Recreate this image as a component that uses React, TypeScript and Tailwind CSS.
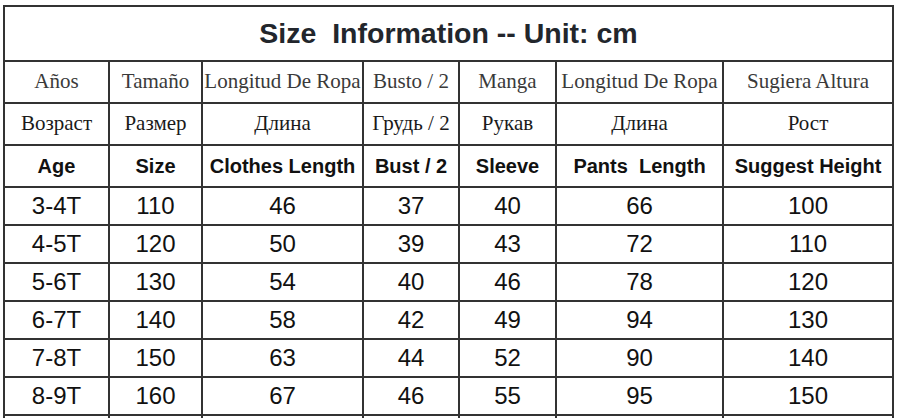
import React from 'react';

const cols = [105, 93, 161, 96, 97, 167, 170];

const spanishRow = ['Años', 'Tamaño', 'Longitud De Ropa', 'Busto / 2', 'Manga', 'Longitud De Ropa', 'Sugiera Altura'];
const russianRow = ['Возраст', 'Размер', 'Длина', 'Грудь / 2', 'Рукав', 'Длина', 'Рост'];
const englishRow = ['Age', 'Size', 'Clothes Length', 'Bust / 2', 'Sleeve', 'Pants  Length', 'Suggest Height'];

const rows = [
  ['3-4T', '110', '46', '37', '40', '66', '100'],
  ['4-5T', '120', '50', '39', '43', '72', '110'],
  ['5-6T', '130', '54', '40', '46', '78', '120'],
  ['6-7T', '140', '58', '42', '49', '94', '130'],
  ['7-8T', '150', '63', '44', '52', '90', '140'],
  ['8-9T', '160', '67', '46', '55', '95', '150'],
];

const cell = 'border-2 border-[#333] text-center align-middle p-0 whitespace-pre';

export default function App() {
  return (
    <div className="bg-white w-[900px] h-[418px] overflow-hidden pl-[3px] pt-[5px]">
      <table className="table-fixed border-collapse w-[891px]">
        <colgroup>
          {cols.map((w, i) => (
            <col key={i} style={{ width: w }} />
          ))}
        </colgroup>
        <tbody>
          <tr className="h-[55px]">
            <td
              colSpan={7}
              className={`${cell} font-['Liberation_Sans',Arial,sans-serif] font-bold text-[28.5px] text-[#22262c]`}
            >
              {'Size  Information -- Unit: cm'}
            </td>
          </tr>
          <tr className="h-[42px]">
            {spanishRow.map((t, i) => (
              <td key={i} className={`${cell} font-['Liberation_Serif',serif] text-[21px] text-[#3a3a3a]`}>
                {t}
              </td>
            ))}
          </tr>
          <tr className="h-[42px]">
            {russianRow.map((t, i) => (
              <td key={i} className={`${cell} font-['Liberation_Serif',serif] text-[21px] text-[#1a1a1a]`}>
                {t}
              </td>
            ))}
          </tr>
          <tr className="h-[42px]">
            {englishRow.map((t, i) => (
              <td key={i} className={`${cell} font-['Liberation_Sans',Arial,sans-serif] font-bold text-[20px] text-[#111]`}>
                {t}
              </td>
            ))}
          </tr>
          {rows.map((r, ri) => (
            <tr key={ri} className="h-[38px]">
              {r.map((t, i) => (
                <td key={i} className={`${cell} font-['Liberation_Sans',Arial,sans-serif] text-[24px] text-[#111]`}>
                  {t}
                </td>
              ))}
            </tr>
          ))}
          <tr className="h-[38px]">
            {cols.map((_, i) => (
              <td key={i} className={cell} />
            ))}
          </tr>
        </tbody>
      </table>
    </div>
  );
}
